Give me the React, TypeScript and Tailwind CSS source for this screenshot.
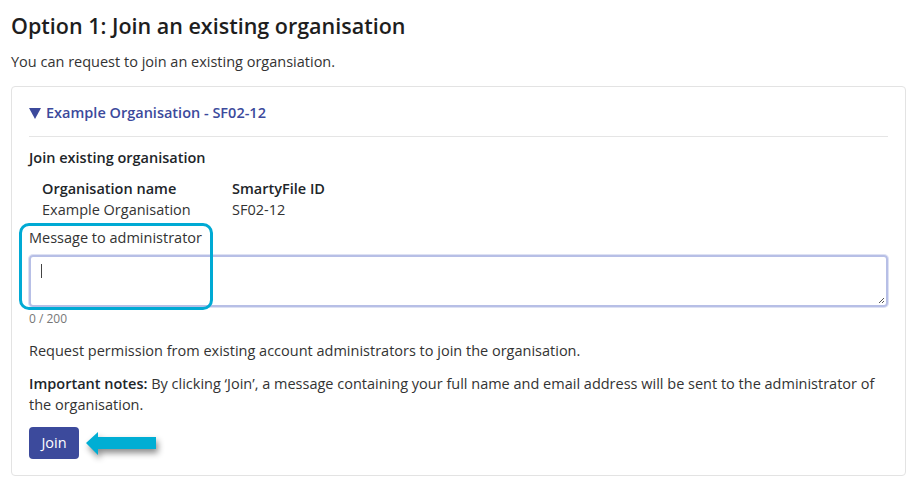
import React from "react";

export default function App() {
  return (
    <div className="w-[915px] h-[487px] bg-white overflow-hidden text-[#212529]" style={{ fontFamily: '"Open Sans", "Noto Sans", sans-serif' }}>
      <div className="pl-[11px] pr-[9px] pt-[12px]">
        <h2 className="text-[21.5px] font-semibold leading-[28px] text-[#1e1e1e]">Option 1: Join an existing organisation</h2>
        <p className="mt-[12px] text-[14.5px] leading-[20px] text-[#333]">You can request to join an existing organsiation.</p>
        <div className="mt-[14px] h-[390px] border border-[#e3e3e3] rounded-[4px] px-[17px] pt-[15px]">
          <div className="flex items-center gap-[5px] text-[14.5px] font-semibold text-[#3c4a9c] leading-[22px]">
            <svg width="12" height="11" viewBox="0 0 12 11"><polygon points="0,0 12,0 6,11" fill="#3c4a9c" /></svg>
            <span>Example Organisation - SF02-12</span>
          </div>
          <div className="mt-[12px] border-t border-[#e5e5e5]" />
          <div className="mt-[11px] text-[14.5px] font-semibold leading-[20px]">Join existing organisation</div>
          <div className="mt-[10px] ml-[13px] grid grid-cols-[190px_auto] text-[14.5px] leading-[21px]">
            <div className="font-semibold">Organisation name</div>
            <div className="font-semibold">SmartyFile ID</div>
            <div className="text-[#333]">Example Organisation</div>
            <div className="text-[#333]">SF02-12</div>
          </div>
          <div className="relative mt-[8px]">
            <div className="text-[14.5px] leading-[20px] text-[#333]">Message to administrator</div>
            <div className="mt-[7px] h-[52px] rounded-[4px] border-2 border-[#b7bfe6] ring-1 ring-[#dde1f3] relative">
              <div className="absolute left-[10px] top-[7px] w-px h-[14px] bg-[#444]" />
              <svg className="absolute right-[1px] bottom-[1px]" width="7" height="7" viewBox="0 0 7 7"><path d="M6 1 L1 6 M6 4 L4 6" stroke="#555" strokeWidth="1" /></svg>
            </div>
            <div className="absolute left-[-10px] top-[-5px] w-[194px] h-[87px] rounded-[10px] border-[3px] border-[#00aad4]" />
          </div>
          <div className="mt-[4px] text-[12px] leading-[16px] text-[#777]">0 / 200</div>
          <p className="mt-[13px] text-[14.5px] leading-[21px] text-[#333]">Request permission from existing account administrators to join the organisation.</p>
          <p className="mt-[12px] text-[14.5px] leading-[21px] text-[#333]"><span className="font-semibold text-[#212529]">Important notes:</span> By clicking ‘Join’, a message containing your full name and email address will be sent to the administrator of the organisation.</p>
          <div className="mt-[12px] flex items-start">
            <button className="h-[32px] w-[50px] rounded-[4px] bg-[#3c4a9c] text-white text-[14.5px]">Join</button>
            <svg className="ml-[5px]" width="80" height="40" viewBox="0 0 80 40" style={{ filter: "drop-shadow(2px 4px 3px rgba(0,0,0,0.45))" }}>
              <polygon points="2,16 14,5 14,10 72,10 72,22 14,22 14,28" fill="#00aed4" />
            </svg>
          </div>
        </div>
      </div>
    </div>
  );
}
